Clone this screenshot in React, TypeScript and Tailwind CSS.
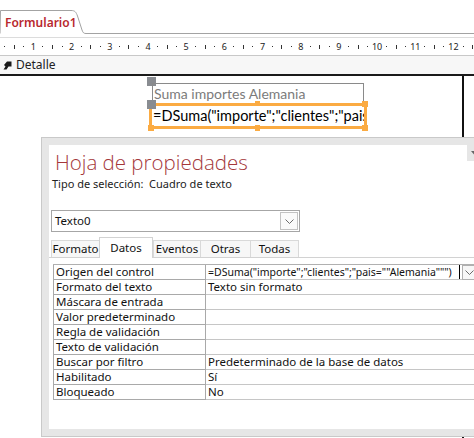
import React from "react";

const UI = { fontFamily: '"Noto Sans", "Open Sans", sans-serif' };
const CANVAS = { fontFamily: 'Lato, "Open Sans", sans-serif' };

const rows: [string, string][] = [
  ["Origen del control", '=DSuma("importe";"clientes";"pais=""Alemania""")'],
  ["Formato del texto", "Texto sin formato"],
  ["Máscara de entrada", ""],
  ["Valor predeterminado", ""],
  ["Regla de validación", ""],
  ["Texto de validación", ""],
  ["Buscar por filtro", "Predeterminado de la base de datos"],
  ["Habilitado", "Sí"],
  ["Bloqueado", "No"],
];

const tabs = [
  { label: "Formato", w: "w-[48px]" },
  { label: "Datos", w: "w-[54px]", active: true },
  { label: "Eventos", w: "w-[47px]" },
  { label: "Otras", w: "w-[50px]" },
  { label: "Todas", w: "w-[49px]" },
];

// ruler: repeating pattern of dot, bar, dot, number
function Ruler() {
  const slots: React.ReactNode[] = [];
  for (let i = 0; i < 50; i++) {
    const k = i % 4;
    let inner: React.ReactNode;
    if (k === 3) {
      inner = <span className="text-[9px] leading-none text-[#222]">{(i + 1) / 4}</span>;
    } else if (k === 1) {
      inner = <span className="block w-px h-[4px] bg-[#333]" />;
    } else {
      inner = <span className="block w-px h-px bg-[#333]" />;
    }
    slots.push(
      <div key={i} className="w-[9.55px] shrink-0 flex items-center justify-center">
        {inner}
      </div>
    );
  }
  return <div className="flex h-full items-center">{slots}</div>;
}

function Chevron() {
  return (
    <svg width="9" height="5" viewBox="0 0 9 5">
      <path d="M0.5 0.5 L4.5 4.5 L8.5 0.5" fill="none" stroke="#6b6b6b" strokeWidth="1" />
    </svg>
  );
}

export default function App() {
  return (
    <div className="relative w-[474px] h-[438px] overflow-hidden bg-white flex flex-col" style={UI}>
      {/* document tab strip */}
      <div className="flex items-end h-[34px] shrink-0">
        <div className="relative w-[86px] h-[24px] shrink-0 flex items-center pl-[5px] pt-[2px]">
          <svg className="absolute inset-0" width="86" height="24" viewBox="0 0 86 24">
            <path
              d="M0 23.5 L0.5 0.5 L71 0.5 C75 0.5 76 2 77.5 6 L82 20 C83 23 84 23.5 86 23.5"
              fill="white"
              stroke="#a3a3a3"
              strokeWidth="1"
            />
          </svg>
          <span className="relative text-[12px] font-semibold text-[#b8282e]">Formulario1</span>
        </div>
        <div className="flex-1 border-b border-[#a3a3a3]" />
      </div>

      {/* ruler */}
      <div className="mt-[3px] h-[19px] shrink-0 border-t border-b border-t-[#dcdcdc] border-b-[#c8c8c8]">
        <Ruler />
      </div>

      {/* section bar */}
      <div className="h-[20px] shrink-0 bg-[#f7f7f7] border-b-2 border-[#1a1a1a] flex items-center pl-[3px] gap-[4px]">
        <svg width="9" height="9" viewBox="0 0 9 9">
          <path d="M4 0.5 L8.5 0.5 L8.5 5.5 L5.5 5.5 L3.5 8.5 L0.5 8.5 L2.5 5.5 L1 4 Z" fill="#1a1a1a" />
        </svg>
        <span className="text-[12px] text-[#222]">Detalle</span>
      </div>

      {/* form canvas */}
      <div className="flex-1 flex">
        <div className="relative w-[464px] border-r-2 border-[#111]" style={CANVAS}>
          {/* label control */}
          <div className="absolute left-[147px] top-[1px] w-[9px] h-[9px] bg-[#898c91]" />
          <div className="absolute left-[152px] top-[7px] w-[212px] h-[21px] border border-[#8a8a8a] flex items-center pl-[1px]">
            <span className="text-[14px] text-[#7b7b7b] whitespace-nowrap">Suma importes Alemania</span>
          </div>
          {/* text box control, selected */}
          <div className="absolute left-[149px] top-[27px] w-[218px] h-[26px] border-[3px] border-[#fbab42] bg-white overflow-hidden flex items-center pl-[1px]">
            <span className="text-[14.5px] text-black whitespace-nowrap">=DSuma("importe";"clientes";"pais=""Alemania""")</span>
          </div>
          <div className="absolute left-[147px] top-[24px] w-[9px] h-[9px] bg-[#898c91]" />
          <div className="absolute left-[255px] top-[25px] w-[5px] h-[5px] bg-[#fbab42]" />
          <div className="absolute left-[362px] top-[25px] w-[6px] h-[6px] bg-[#fbab42]" />
          <div className="absolute left-[148px] top-[49px] w-[6px] h-[6px] bg-[#fbab42]" />
          <div className="absolute left-[255px] top-[49px] w-[5px] h-[6px] bg-[#fbab42]" />
          <div className="absolute left-[362px] top-[49px] w-[6px] h-[6px] bg-[#fbab42]" />
        </div>
        <div className="flex-1" />
      </div>

      {/* property sheet window */}
      <div className="absolute left-[41px] top-[137px] w-[450px] h-[300px] bg-[#e6e6e6] border border-[#c9c9c9] p-[7px]">
        <div className="w-full h-full bg-white flex flex-col">
          <div className="pl-[6px] pt-[2px] h-[31px] leading-[30px] text-[20.5px] font-light text-[#a4373a]" style={{ fontFamily: '"Open Sans", "Noto Sans", sans-serif' }}>
            Hoja de propiedades
          </div>
          <div className="pl-[3px] h-[16px] leading-[16px] text-[11px] text-[#222] whitespace-pre">
            {"Tipo de selección:  Cuadro de texto"}
          </div>

          {/* object selector */}
          <div className="ml-[2px] mt-[18px] w-[249px] h-[22px] border border-[#a6a6a6] flex items-center justify-between pl-[3px] pr-[1px]">
            <span className="text-[11.5px] text-[#111]">Texto0</span>
            <div className="w-[18px] h-[18px] border border-[#c2c2c2] bg-[#fafafa] flex items-center justify-center">
              <Chevron />
            </div>
          </div>

          {/* tabs */}
          <div className="mt-[5px] h-[21px] flex items-end border-b border-[#d2d2d2] pl-[2px]">
            {tabs.map((t) =>
              t.active ? (
                <div
                  key={t.label}
                  className={`${t.w} h-[21px] -mb-px bg-white border border-b-0 border-[#d2d2d2] flex items-start justify-center pt-[1px] text-[11.5px] text-[#111]`}
                >
                  {t.label}
                </div>
              ) : (
                <div
                  key={t.label}
                  className={`${t.w} h-[17px] bg-[#f7f7f7] border border-b-0 border-r-0 last:border-r border-[#d9d9d9] flex items-center justify-center text-[11.5px] text-[#111]`}
                >
                  {t.label}
                </div>
              )
            )}
          </div>

          {/* property grid */}
          <div className="ml-[4px] mt-[6px] border-t border-[#b0b0b0]">
            {rows.map(([name, value], i) => (
              <div key={name} className="flex h-[15px] text-[11.5px] leading-[14px] text-[#111]">
                <div className="w-[153px] shrink-0 border-l border-r border-b border-[#a9a9a9] pl-[2px] whitespace-nowrap">
                  {name}
                </div>
                <div className="flex-1 border-b border-[#c6c6c6] pl-[2px] whitespace-nowrap flex items-start">
                  {i === 0 ? (
                    <>
                      <span className="w-[251px] text-[10.5px]">{value}</span>
                      <span className="w-px h-[14px] bg-black" />
                      <span className="ml-[2px] w-[14px] h-[15px] border border-[#b0b0b0] bg-[#f7f7f7] flex items-center justify-center">
                        <Chevron />
                      </span>
                    </>
                  ) : (
                    <span>{value}</span>
                  )}
                </div>
              </div>
            ))}
          </div>
        </div>
      </div>

      {/* window menu button */}
      <div className="absolute left-[467px] top-[145px] w-[10px] h-[16px] bg-[#e6e6e6] flex items-center pl-[4px]">
        <svg width="6" height="4" viewBox="0 0 6 4">
          <path d="M0 0 L6 0 L3 3.5 Z" fill="#666" />
        </svg>
      </div>
    </div>
  );
}
